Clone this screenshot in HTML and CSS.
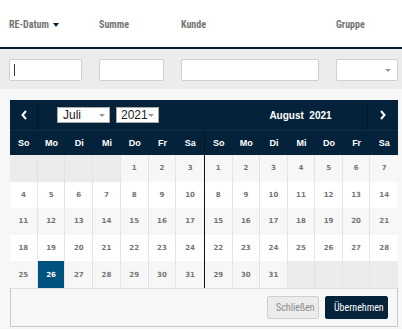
FILE: index.html
```html
<!DOCTYPE html>
<html>

<head>
    <title>Rechnungen</title>
    <link rel="stylesheet" href="styles.css">
</head>

<body>
    <!-- Table head -->
    <div class="thead">
        <div class="th col-date">RE-Datum <span class="sort-caret"></span></div>
        <div class="th col-sum">Summe</div>
        <div class="th col-customer">Kunde</div>
        <div class="th col-group">Gruppe</div>
    </div>

    <!-- Filter row -->
    <div class="filters">
        <div class="col-date"><div class="filter-input"><span class="text-cursor"></span></div></div>
        <div class="col-sum"><div class="filter-input"></div></div>
        <div class="col-customer"><div class="filter-input"></div></div>
        <div class="col-group"><div class="filter-select"><span class="select-caret"></span></div></div>
    </div>

    <div class="rest"></div>

    <!-- Date range picker -->
    <div class="picker">
        <div class="picker-head">
            <div class="cal-head">
                <div class="nav-btn nav-prev">
                    <svg width="8" height="10" viewBox="0 0 8 10"><path d="M6 1 L2.5 5 L6 9" fill="none" stroke="#fff" stroke-width="2"/></svg>
                </div>
                <div class="head-selects">
                    <div class="mini-select month-select">Juli <span class="select-caret"></span></div>
                    <div class="mini-select year-select">2021 <span class="select-caret"></span></div>
                </div>
            </div>
            <div class="cal-head cal-head-right">
                <div class="head-title">August&nbsp; 2021</div>
                <div class="nav-btn nav-next">
                    <svg width="8" height="10" viewBox="0 0 8 10"><path d="M2 1 L5.5 5 L2 9" fill="none" stroke="#fff" stroke-width="2"/></svg>
                </div>
            </div>
        </div>
        <div class="months">
            <div class="month" id="july"></div>
            <div class="month month-right" id="august"></div>
        </div>
        <div class="picker-foot">
            <button class="btn btn-close">Schließen</button>
            <button class="btn btn-apply">Übernehmen</button>
        </div>
    </div>

    <script>
        const dayNames = ["So", "Mo", "Di", "Mi", "Do", "Fr", "Sa"];

        function buildMonth(el, offset, days, selected) {
            let html = "";
            dayNames.forEach(d => html += '<div class="dow">' + d + '</div>');
            for (let i = 0; i < 35; i++) {
                const day = i - offset + 1;
                const stripe = Math.floor(i / 7) % 2 === 0 ? " odd" : "";
                if (day < 1 || day > days) {
                    html += '<div class="day empty"></div>';
                } else {
                    const sel = day === selected ? " selected" : "";
                    html += '<div class="day' + stripe + sel + '">' + day + '</div>';
                }
            }
            el.innerHTML = html;
        }

        buildMonth(document.getElementById("july"), 4, 31, 26);
        buildMonth(document.getElementById("august"), 0, 31, 0);
    </script>
</body>

</html>
```

FILE: styles.css
```css
body {
    margin: 0;
    background-color: #fff;
    font-family: "Liberation Sans", Arial, sans-serif;
}

.thead {
    display: flex;
    height: 49px;
    align-items: center;
    padding-top: 2px;
    box-sizing: border-box;
    border-bottom: 2px solid #0a1e2d;
}

.th {
    font-family: "Liberation Sans Narrow", "Roboto Condensed", "DejaVu Sans Condensed", sans-serif;
    font-size: 10px;
    font-weight: bold;
    color: #747474;
}

.col-date {
    width: 90px;
    padding-left: 9px;
}

.col-sum {
    width: 82px;
}

.col-customer {
    width: 155px;
}

.col-group {
    width: 66px;
}

.sort-caret {
    display: inline-block;
    margin-left: 2px;
    vertical-align: middle;
    border-left: 3.5px solid transparent;
    border-right: 3.5px solid transparent;
    border-top: 4px solid #0a1e2d;
}

/* Filter row */
.filters {
    display: flex;
    height: 40px;
    align-items: center;
    padding-top: 1px;
    box-sizing: border-box;
    background-color: #ececec;
}

.filter-input,
.filter-select {
    box-sizing: border-box;
    height: 22px;
    border: 1px solid #cfcfcf;
    border-radius: 2px;
    background-color: #fff;
    display: flex;
    align-items: center;
    padding: 0 4px;
}

.text-cursor {
    width: 1px;
    height: 12px;
    background-color: #333;
}

.col-date .filter-input {
    width: 73px;
}

.col-sum .filter-input {
    width: 65px;
}

.col-customer .filter-input {
    width: 138px;
}

.filter-select {
    width: 62px;
    position: relative;
}

.filter-select .select-caret {
    position: absolute;
    right: 6px;
    top: 9px;
}

.select-caret {
    display: inline-block;
    border-left: 3px solid transparent;
    border-right: 3px solid transparent;
    border-top: 3px solid #999;
}

.rest {
    height: 240px;
    background-color: #f7f7f7;
}

/* Picker */
.picker {
    position: absolute;
    left: 10px;
    top: 100px;
    width: 388px;
    background-color: #f7f7f7;
    border: 1px solid #c8c8c8;
    border-top: none;
    box-sizing: border-box;
}

.picker-head {
    display: flex;
    height: 31px;
    background-color: #04233a;
    border-bottom: 1px solid #0f2e44;
    box-sizing: border-box;
    margin: 0 -1px;
}

.cal-head {
    display: flex;
    width: 194px;
    align-items: stretch;
}

.cal-head-right {
    justify-content: flex-end;
}

.nav-btn {
    width: 27px;
    display: flex;
    align-items: center;
    justify-content: center;
}

.nav-prev {
    border-right: 1px solid #0b1824;
}

.nav-next {
    width: 30px;
    border-left: 1px solid #0b1824;
}

.head-selects {
    display: flex;
    align-items: center;
    gap: 6px;
    padding-left: 19px;
}

.mini-select {
    box-sizing: border-box;
    height: 16px;
    background-color: #fff;
    border: 1px solid #aaa;
    font-size: 12px;
    line-height: 14px;
    color: #222;
    display: flex;
    align-items: center;
    justify-content: space-between;
    padding: 0 4px;
}

.month-select {
    width: 53px;
    padding-left: 5px;
}

.year-select {
    width: 43px;
}

.head-title {
    flex: 1;
    text-align: center;
    align-self: center;
    color: #fff;
    font-weight: bold;
    font-size: 10px;
    padding-left: 30px;
}

.months {
    display: flex;
    margin: 0 -1px;
}

.month {
    width: 194px;
    display: grid;
    grid-template-columns: repeat(7, 1fr);
    grid-template-rows: 24px repeat(5, 26.6px);
    box-sizing: border-box;
}

.month-right {
    border-left: 1px solid #111;
}

.dow {
    background-color: #04233a;
    color: #fff;
    font-weight: bold;
    font-size: 9px;
    display: flex;
    align-items: center;
    justify-content: center;
}

.day {
    display: flex;
    align-items: center;
    justify-content: center;
    font-size: 7px;
    font-family: "DejaVu Sans", sans-serif;
    font-weight: bold;
    color: #757575;
    background-color: #fff;
    border-right: 1px solid #e4e4e4;
}

.day:nth-child(7n) {
    border-right: none;
}

.day.odd {
    background-color: #f7f7f7;
}

.day.empty {
    background-color: #ececec;
}

.day.selected {
    background-color: #00527f;
    color: #fff;
}

.picker-foot {
    display: flex;
    justify-content: flex-end;
    gap: 6px;
    height: 37px;
    align-items: center;
    padding-right: 9px;
    border-top: 1px solid #e0e0e0;
}

.btn {
    height: 23px;
    font-family: "Liberation Sans Narrow", "Roboto Condensed", sans-serif;
    font-size: 10px;
    border-radius: 2px;
    padding: 0 8px;
}

.btn-close {
    background-color: #ececec;
    border: 1px solid #cfcfcf;
    color: #8a8a8a;
    width: 52px;
}

.btn-apply {
    background-color: #04233a;
    border: 1px solid #04233a;
    color: #fff;
    width: 63px;
}
```
